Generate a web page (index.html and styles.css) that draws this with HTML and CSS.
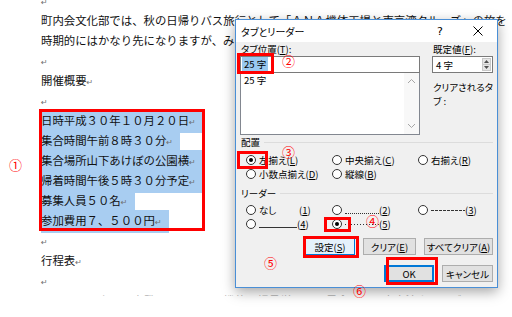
FILE: index.html
```html
<!DOCTYPE html>
<html lang="ja">
<head>
  <meta charset="UTF-8" />
  <meta name="viewport" content="width=device-width, initial-scale=1" />
  <title>タブとリーダー</title>
  <link rel="stylesheet" href="styles.css">
</head>
<body>

  <!-- 文書本文 -->
  <div class="doc">
    <p><span class="pm">↵</span></p>
    <p>町内会文化部では、秋の日帰りバス旅行として「ＡＮＡ機体工場と東京湾クルーズ」の旅を</p>
    <p>時期的にはかなり先になりますが、みなさまのご参加をお待ちしております。<span class="pm">↵</span></p>
    <p><span class="pm">↵</span></p>
    <p>開催概要<span class="pm">↵</span></p>
    <p><span class="pm">↵</span></p>
    <p><span class="sel">日時平成３０年１０月２０日<span class="pm">↵</span></span></p>
    <p><span class="sel">集合時間午前８時３０分<span class="pm">↵</span></span></p>
    <p><span class="sel">集合場所山下あけぼの公園横<span class="pm">↵</span></span></p>
    <p><span class="sel">帰着時間午後５時３０分予定<span class="pm">↵</span></span></p>
    <p><span class="sel">募集人員５０名<span class="pm">↵</span></span></p>
    <p><span class="sel">参加費用７、５００円<span class="pm">↵</span></span></p>
    <p><span class="pm">↵</span></p>
    <p>行程表<span class="pm">↵</span></p>
    <p><span class="pm">↵</span></p>
    <p class="cut">８：００　山下　出発　→　ＡＮＡ機体工場見学　→　昼食　→　東京湾クルーズ</p>
  </div>

  <!-- タブとリーダー ダイアログ -->
  <div class="dialog">
    <div class="titlebar">
      <span class="title">タブとリーダー</span>
      <span class="help">?</span>
      <span class="close">
        <svg width="10" height="10" viewBox="0 0 10 10"><path d="M0.5 0.5 L9.5 9.5 M9.5 0.5 L0.5 9.5" stroke="#000" stroke-width="1" fill="none"/></svg>
      </span>
    </div>

    <div class="dlg-body">
      <div class="top">
        <div class="col-left">
          <div class="lbl">タブ位置(<u>T</u>):</div>
          <div class="edit"><span class="hl">25 字</span></div>
          <div class="list">
            <div class="item">25 字</div>
            <div class="scroll">
              <svg width="9" height="6" viewBox="0 0 9 6"><path d="M1 5 L4.5 1.5 L8 5" stroke="#a6a6a6" fill="none"/></svg>
              <svg width="9" height="6" viewBox="0 0 9 6"><path d="M1 1 L4.5 4.5 L8 1" stroke="#a6a6a6" fill="none"/></svg>
            </div>
          </div>
        </div>
        <div class="col-right">
          <div class="lbl">既定値(<u>F</u>):</div>
          <div class="spin">
            <span>4 字</span>
            <div class="spin-btns">
              <span><svg width="5" height="3" viewBox="0 0 5 3"><path d="M0 3 L2.5 0 L5 3 Z" fill="#505050"/></svg></span>
              <span><svg width="5" height="3" viewBox="0 0 5 3"><path d="M0 0 L2.5 3 L5 0 Z" fill="#505050"/></svg></span>
            </div>
          </div>
          <div class="lbl clear-lbl">クリアされるタブ :</div>
        </div>
      </div>

      <div class="group"><span>配置</span><i class="rule"></i></div>
      <div class="opts">
        <div class="opt"><span class="radio on"></span><span>左揃え(<u>L</u>)</span></div>
        <div class="opt"><span class="radio"></span><span>中央揃え(<u>C</u>)</span></div>
        <div class="opt"><span class="radio"></span><span>右揃え(<u>R</u>)</span></div>
        <div class="opt"><span class="radio"></span><span>小数点揃え(<u>D</u>)</span></div>
        <div class="opt"><span class="radio"></span><span>縦線(<u>B</u>)</span></div>
      </div>

      <div class="group group-leader"><span>リーダー</span><i class="rule"></i></div>
      <div class="opts opts-leader">
        <div class="opt"><span class="radio"></span><span><span class="ld ld-none">なし</span>(<u>1</u>)</span></div>
        <div class="opt"><span class="radio"></span><span><span class="ld ld-dot"></span>(<u>2</u>)</span></div>
        <div class="opt"><span class="radio"></span><span><span class="ld ld-dash"></span>(<u>3</u>)</span></div>
        <div class="opt"><span class="radio"></span><span><span class="ld ld-line"></span>(<u>4</u>)</span></div>
        <div class="opt"><span class="radio on"></span><span><span class="ld ld-mid"></span>(<u>5</u>)</span></div>
      </div>

      <div class="btns">
        <button class="btn btn-hover w50">設定(<u>S</u>)</button>
        <button class="btn w53">クリア(<u>E</u>)</button>
        <button class="btn w69">すべてクリア(<u>A</u>)</button>
      </div>
      <div class="btns btns-bottom">
        <button class="btn btn-default w50">OK</button>
        <button class="btn w51">キャンセル</button>
      </div>
    </div>
  </div>

  <!-- 注釈（赤枠と番号） -->
  <div class="rbox box1"></div>
  <div class="rbox box2"></div>
  <div class="rbox box3"></div>
  <div class="rbox box4"></div>
  <div class="rbox box5"></div>
  <div class="rbox box6"></div>

  <span class="num n1">①</span>
  <span class="num n2">②</span>
  <span class="num n3">③</span>
  <span class="num n4">④</span>
  <span class="num n5">⑤</span>
  <span class="num n6">⑥</span>

</body>
</html>
```

FILE: styles.css
```css
body {
  margin: 0;
  width: 512px;
  height: 317px;
  overflow: hidden;
  position: relative;
  background: #fff;
  font-family: "Noto Sans CJK JP", sans-serif;
}

/* 文書 */
.doc {
  margin-top: -10px;
  padding-left: 41px;
  font-size: 11.4px;
  line-height: 20px;
  color: #111;
  white-space: nowrap;
}
.doc p {
  margin: 0;
  height: 20px;
}
.sel {
  display: inline-block;
  background: #a8cdf1;
  padding-right: 5px;
}
.pm {
  display: inline-block;
  width: 9px;
  font-family: "DejaVu Sans", sans-serif;
  font-size: 8px;
  color: #6f6f6f;
}
.doc p.cut {
  height: 6px;
  overflow: hidden;
  color: #b4b4b4;
}

/* ダイアログ */
.dialog {
  position: absolute;
  left: 235px;
  top: 19px;
  width: 263px;
  height: 269px;
  box-sizing: border-box;
  border: 1px solid #4a8fd6;
  background: #f0f0f0;
  box-shadow: 0 4px 12px rgba(0,0,0,0.35);
  font-size: 9.5px;
  font-feature-settings: "palt";
  color: #000;
  z-index: 2;
}
.titlebar {
  height: 22px;
  background: #fff;
  display: flex;
  align-items: center;
}
.title {
  padding-left: 5px;
  font-size: 10px;
}
.help {
  margin-left: auto;
  width: 38px;
  text-align: center;
  font-family: "DejaVu Sans", sans-serif;
  font-size: 11px;
}
.close {
  width: 38px;
  display: flex;
  justify-content: center;
}
.dlg-body {
  padding: 0 4px 0 4px;
}
.top {
  display: grid;
  grid-template-columns: 180px 61px;
  column-gap: 12px;
}
.lbl {
  height: 14px;
  line-height: 14px;
  padding-left: 1px;
}
.edit {
  height: 17px;
  box-sizing: border-box;
  border: 1px solid #7a7a7a;
  background: #fff;
  padding-left: 1px;
  line-height: 15px;
}
.hl {
  background: #99c9ef;
  padding: 0 2px;
}
.list {
  height: 62px;
  box-sizing: border-box;
  border: 1px solid #828790;
  border-top: none;
  background: #fff;
  display: flex;
}
.item {
  flex: 1;
  padding-left: 3px;
  line-height: 14px;
}
.scroll {
  width: 15px;
  background: #f8f8f8;
  display: flex;
  flex-direction: column;
  justify-content: space-between;
  align-items: center;
  padding: 5px 0;
}
.spin {
  height: 17px;
  box-sizing: border-box;
  border: 1px solid #7a7a7a;
  background: #fff;
  display: flex;
  align-items: center;
  padding-left: 3px;
}
.spin > span {
  flex: 1;
}
.spin-btns {
  width: 9px;
  height: 13px;
  margin-right: 1px;
  display: flex;
  flex-direction: column;
}
.spin-btns span {
  flex: 1;
  display: flex;
  align-items: center;
  justify-content: center;
  background: #e6e6e6;
  border: 1px solid #c8c8c8;
}
.spin-btns span + span {
  border-top: none;
}
.clear-lbl {
  margin-top: 7px;
}

.group {
  display: flex;
  align-items: center;
  gap: 4px;
  height: 14px;
  padding-left: 1px;
}
.rule {
  flex: 1;
  height: 1px;
  background: #dcdcdc;
}
.group-leader {
  margin-top: 5px;
}
.opts {
  display: grid;
  grid-template-columns: 86px 86px 86px;
  grid-auto-rows: 14px;
  padding-left: 6px;
  margin-top: 4px;
}
.opts-leader {
  margin-top: 3px;
}
.opt {
  display: flex;
  align-items: center;
  gap: 3px;
  white-space: nowrap;
}
.radio {
  width: 10px;
  height: 10px;
  box-sizing: border-box;
  border: 1px solid #333;
  border-radius: 50%;
  background: #fff;
  position: relative;
  flex: none;
}
.radio.on::after {
  content: "";
  position: absolute;
  left: 2px;
  top: 2px;
  width: 4px;
  height: 4px;
  border-radius: 50%;
  background: #000;
}
.ld {
  display: inline-block;
  height: 8px;
}
.ld-none {
  width: 40px;
  height: auto;
}
.ld-dot {
  width: 34px;
  border-bottom: 1px dotted #333;
}
.ld-dash {
  width: 34px;
  background: repeating-linear-gradient(90deg, #333 0 3px, transparent 3px 4px) center / 100% 1px no-repeat;
}
.ld-line {
  width: 38px;
  border-bottom: 1px solid #333;
}
.ld-mid {
  width: 34px;
  background: repeating-linear-gradient(90deg, #333 0 1px, transparent 1px 3px) center / 100% 1px no-repeat;
}

.btns {
  display: flex;
  justify-content: flex-end;
  gap: 8px;
  margin-top: 7px;
}
.btns-bottom {
  margin-top: 10px;
}
.btn {
  height: 17px;
  padding: 0;
  box-sizing: border-box;
  border: 1px solid #adadad;
  background: #e1e1e1;
  font-family: inherit;
  font-size: 9.5px;
  font-feature-settings: "palt";
  color: #000;
}
.btn-hover {
  background: #e5f1fb;
  border-color: #0078d7;
}
.btn-default {
  border: 2px solid #0078d7;
}
.w50 { width: 50px; }
.w51 { width: 51px; }
.w53 { width: 53px; }
.w69 { width: 69px; }

/* 注釈 */
.rbox {
  position: absolute;
  box-sizing: border-box;
  border: 3px solid #f00;
  z-index: 3;
}
.box1 { left: 39px; top: 109px; width: 166px; height: 122px; }
.box2 { left: 237px; top: 53px; width: 37px; height: 21px; }
.box3 { left: 237px; top: 151px; width: 31px; height: 18px; }
.box4 { left: 324px; top: 217px; width: 27px; height: 15px; }
.box5 { left: 303px; top: 236px; width: 56px; height: 22px; }
.box6 { left: 386px; top: 257px; width: 52px; height: 28px; }

.num {
  position: absolute;
  z-index: 4;
  width: 13px;
  height: 13px;
  line-height: 13px;
  font-size: 13px;
  color: #f00;
  text-align: center;
}
.n1 { left: 9px; top: 158px; }
.n2 { left: 282px; top: 54px; }
.n3 { left: 282px; top: 145px; }
.n4 { left: 366px; top: 214px; }
.n5 { left: 264px; top: 256px; }
.n6 { left: 353px; top: 284px; }
```
